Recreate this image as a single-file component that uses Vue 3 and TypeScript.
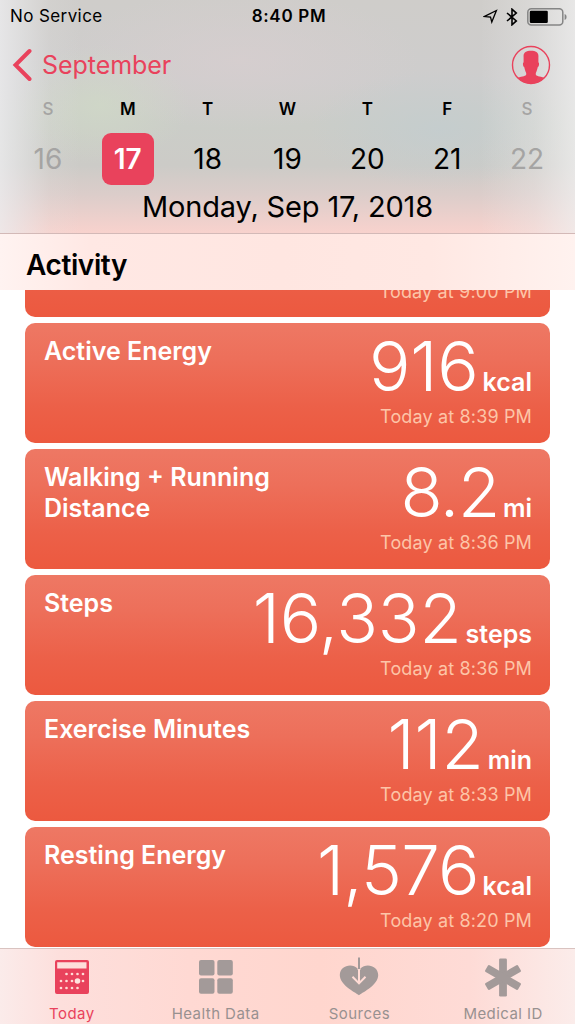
<script setup lang="ts">
interface Day { letter: string; date: number; state?: 'muted' | 'selected' }
interface Card { title: string; value: string; unit: string; time: string; cls: string }

const days: Day[] = [
  { letter: 'S', date: 16, state: 'muted' },
  { letter: 'M', date: 17, state: 'selected' },
  { letter: 'T', date: 18 },
  { letter: 'W', date: 19 },
  { letter: 'T', date: 20 },
  { letter: 'F', date: 21 },
  { letter: 'S', date: 22, state: 'muted' },
]

const cards: Card[] = [
  { title: 'Active Energy', value: '916', unit: 'kcal', time: 'Today at 8:39 PM', cls: 'energy' },
  { title: 'Walking + Running Distance', value: '8.2', unit: 'mi', time: 'Today at 8:36 PM', cls: 'distance' },
  { title: 'Steps', value: '16,332', unit: 'steps', time: 'Today at 8:36 PM', cls: 'steps' },
  { title: 'Exercise Minutes', value: '112', unit: 'min', time: 'Today at 8:33 PM', cls: 'exercise' },
  { title: 'Resting Energy', value: '1,576', unit: 'kcal', time: 'Today at 8:20 PM', cls: 'resting' },
]

const dots: [number, number][] = [
  [11.5, 14], [17, 14], [22.5, 14], [28, 14],
  [6, 21], [11.5, 21], [17, 21], [28, 21],
  [6, 28], [11.5, 28], [17, 28], [22.5, 28],
]
</script>

<template>
  <div class="screen">
    <header class="top">
      <div class="status">
        <span class="carrier">No Service</span>
        <span class="clock">8:40 PM</span>
        <span class="indicators">
          <svg class="loc" width="15" height="15" viewBox="0 0 15 15"><path d="M1.6 7.4 13.4 1.5 8.8 13 7.5 8Z" fill="none" stroke="#000" stroke-width="1.3" /></svg>
          <svg class="bt" width="12" height="18" viewBox="0 0 12 18"><path d="M1 5 10.3 12.9 6 16.8V1.2L10.3 5.1 1 13" fill="none" stroke="#000" stroke-width="1.6" /></svg>
          <svg class="battery" width="40" height="18" viewBox="0 0 40 18">
            <rect x="0.8" y="0.8" width="35" height="16.2" rx="3.5" fill="none" stroke="#858585" stroke-width="1.5" />
            <rect x="2.8" y="2.8" width="18" height="12.2" rx="1.3" />
            <path d="M37.6 6v6q2-.7 2-3t-2-3Z" fill="#858585" />
          </svg>
        </span>
      </div>
      <nav class="nav">
        <a class="back">
          <svg width="20" height="34" viewBox="0 0 20 34"><path d="M17.5 3 3.5 17 17.5 31" fill="none" stroke="#e9425c" stroke-width="4" stroke-linecap="round" stroke-linejoin="miter" /></svg>
          <span>September</span>
        </a>
        <svg class="profile" width="40" height="40" viewBox="0 0 40 40">
          <circle cx="20" cy="20" r="18.5" fill="none" stroke="#e9425c" stroke-width="1.4" />
          <path d="M12.6 12C12.2 7.5 15 5.8 20 5.800S27.800 7.500 27.400 12V17.500C28.600 17.500 28.100 22 26.700 22.300C26.300 24.500 25.600 26.500 24.800 28V29.500C25 31.200 28 31.200 33.600 32.800A18.800 18.800 0 0 1 6.400 32.800C12 31.200 15 31.200 15.200 29.500V28C14.400 26.500 13.700 24.500 13.300 22.300C11.900 22 11.400 17.500 12.600 17.500Z" fill="#e9425c" />
        </svg>
      </nav>
      <div class="week">
        <div v-for="day in days" :key="day.date" class="day" :class="day.state">
          <span class="letter">{{ day.letter }}</span>
          <span class="date">{{ day.date }}</span>
        </div>
      </div>
      <div class="full-date">Monday, Sep 17, 2018</div>
    </header>

    <h2 class="section">Activity</h2>

    <main class="list">
      <article class="card partial"><span class="time">Today at 9:00 PM</span></article>
      <article v-for="card in cards" :key="card.title" class="card" :class="card.cls">
        <h3>{{ card.title }}</h3>
        <div class="reading">
          <div class="amount"><span class="value">{{ card.value }}</span><span class="unit">{{ card.unit }}</span></div>
          <span class="time">{{ card.time }}</span>
        </div>
      </article>
    </main>

    <footer class="tabs">
      <a class="tab active">
        <svg width="40" height="40" viewBox="-3 -3 40 40">
          <path fill-rule="evenodd" fill="#e9425c" d="M2 0H32Q34 0 34 2V32Q34 34 32 34H2Q0 34 0 32V2Q0 0 2 0ZM2.2 2.2V8.5H31.5V2.2Z" />
          <circle v-for="([x, y], i) in dots" :key="i" :cx="x" :cy="y" r="1.35" fill="#ffdcd7" />
          <circle cx="22.5" cy="21" r="2.8" fill="#ffe4df" />
        </svg>
        <span>Today</span>
      </a>
      <a class="tab">
        <svg width="40" height="40" viewBox="-3 -3 40 40" fill="#a39a99">
          <rect width="15.5" height="15.5" rx="2" /><rect x="18.3" width="15.5" height="15.5" rx="2" />
          <rect y="18.3" width="15.5" height="15.5" rx="2" /><rect x="18.3" y="18.3" width="15.5" height="15.5" rx="2" />
        </svg>
        <span>Health Data</span>
      </a>
      <a class="tab">
        <svg width="40" height="40" viewBox="0 0 40 40">
          <path fill="#a39a99" d="M20 38.300C15 34.500 .8 28 .8 18 .8 8.500 13 5.500 18.600 11.500V13H21.400V11.500C27 5.500 39.200 8.500 39.200 18 39.200 28 25 34.500 20 38.300Z" />
          <path d="M20 12V26M13.500 19.700 20 26.400 26.500 19.700" fill="none" stroke="#ffdbd5" stroke-width="2" />
          <path d="M20 .5V12" stroke="#a39a99" stroke-width="2" />
        </svg>
        <span>Sources</span>
      </a>
      <a class="tab">
        <svg width="40" height="40" viewBox="0 0 40 40" fill="#a39a99">
          <g transform="translate(20 20.5)">
            <rect x="-3.9" y="-19" width="7.8" height="38" rx="1.3" />
            <rect x="-3.9" y="-19" width="7.8" height="38" rx="1.3" transform="rotate(60)" />
            <rect x="-3.9" y="-19" width="7.8" height="38" rx="1.3" transform="rotate(-60)" />
          </g>
        </svg>
        <span>Medical ID</span>
      </a>
    </footer>
  </div>
</template>

<style>
body { margin: 0; background: #fff; }
</style>

<style scoped>
.screen {
  width: 575px;
  height: 1024px;
  display: flex;
  flex-direction: column;
  overflow: hidden;
  background: #fff;
  color: #000;
  font-family: Inter, "Liberation Sans", sans-serif;
  white-space: nowrap;
}
.top {
  height: 233px;
  flex: none;
  border-bottom: 1px solid #d3b9b7;
  background:
    linear-gradient(90deg, rgba(236,236,238,.8) 0, rgba(234,234,236,.65) 14px, rgba(230,230,230,.15) 50px, rgba(230,230,230,0) 80px, rgba(236,236,236,0) 480px, rgba(238,238,238,.35) 535px, rgba(240,240,240,.75) 575px),
    radial-gradient(ellipse 90px 60px at 100px 105px, rgba(208,218,198,.7), rgba(208,218,198,0)),
    radial-gradient(ellipse 130px 60px at 440px 130px, rgba(194,205,208,.7), rgba(194,205,208,0)),
    radial-gradient(ellipse 180px 70px at 240px 60px, rgba(215,206,207,.8), rgba(215,206,207,0)),
    linear-gradient(180deg, #cfcdca 0, #cecdcd 80px, #cbcdc8 125px, #cccbc7 165px, #dccdca 195px, #f8d2cd 233px);
}
.status {
  display: grid;
  grid-template-columns: 1fr auto 1fr;
  align-items: center;
  height: 33px;
  padding: 0 8px 0 10px;
  font-size: 17px;
  line-height: 33px;
}
.carrier { letter-spacing: .4px; }
.clock { font-weight: 600; letter-spacing: .7px; padding-left: 1px; }
.indicators { display: flex; justify-content: flex-end; align-items: center; }
.bt { margin: 0 9px 0 8px; }
.nav { height: 64px; display: flex; justify-content: space-between; align-items: center; padding: 0 24px 0 12px; }
.back { display: flex; align-items: center; gap: 10px; color: #e9425c; font-size: 25px; letter-spacing: -.05px; }
.week { display: flex; padding: 0 8px; height: 88px; }
.day { flex: 1; display: flex; flex-direction: column; align-items: center; }
.letter { font-size: 17px; font-weight: 600; line-height: 24px; height: 36px; }
.date { width: 52px; height: 52px; border-radius: 9px; line-height: 53px; text-align: center; font-size: 28px; }
.muted { color: #a5a4a3; }
.muted .letter { font-weight: 500; }
.selected .date { background: #e9425c; color: #fff; font-weight: 600; }
.full-date { text-align: center; font-size: 29px; line-height: 43px; letter-spacing: -.15px; }
.section {
  height: 56px;
  flex: none;
  box-sizing: border-box;
  margin: 0;
  padding-left: 26px;
  font-size: 28px;
  font-weight: 600;
  line-height: 63px;
  letter-spacing: -.4px;
  background: linear-gradient(90deg, #fff3f1 0, #ffe8e4 90px, #ffe6e1 280px, #ffe8e3 430px, #fff2ef 575px);
}
.list { flex: 1; min-height: 0; overflow: hidden; padding: 0 25px; display: flex; flex-direction: column; gap: 6px; }
.card {
  flex: none;
  height: 120px;
  box-sizing: border-box;
  display: flex;
  justify-content: space-between;
  padding: 13px 18px 0 19px;
  border-radius: 10px;
  background: linear-gradient(180deg, #ee7864 0, #ed6f5a 30%, #ec6048 70%, #ec593f 100%);
  color: #fff;
}
.partial {
  height: 27px;
  align-items: flex-start;
  justify-content: flex-end;
  padding-top: 0;
  border-radius: 0 0 10px 10px;
  background: linear-gradient(180deg, #ec5d45, #ec593f);
}
.partial .time { margin-top: -10px; }
h3 { margin: 0; font-size: 25px; font-weight: 600; line-height: 30.5px; white-space: normal; max-width: 240px; }
.reading { flex: none; display: flex; flex-direction: column; align-items: flex-end; }
.amount { height: 69px; line-height: 60px; }
.value { font-size: 69px; font-weight: 300; letter-spacing: -.2px; }
.unit { font-size: 25px; font-weight: 600; margin-left: 4px; }
.distance .value { letter-spacing: -1.3px; }
.resting .value { letter-spacing: -.8px; }
.time { font-size: 18px; line-height: 24px; color: #fdc5a8; letter-spacing: .15px; }
.tabs {
  flex: none;
  height: 76px;
  box-sizing: border-box;
  border-top: 1px solid #d9c3c0;
  display: flex;
  background: linear-gradient(90deg, #fbebea 0, #fddfdc 60px, #ffd9d3 190px, #ffd6ce 320px, #fedbd6 470px, #fbecea 575px);
}
.tab { flex: 1; display: flex; flex-direction: column; align-items: center; padding-top: 8px; color: #989190; font-size: 15px; line-height: 20px; letter-spacing: .45px; }
.tab span { margin-top: 7px; }
.active { color: #e9425c; }
</style>
